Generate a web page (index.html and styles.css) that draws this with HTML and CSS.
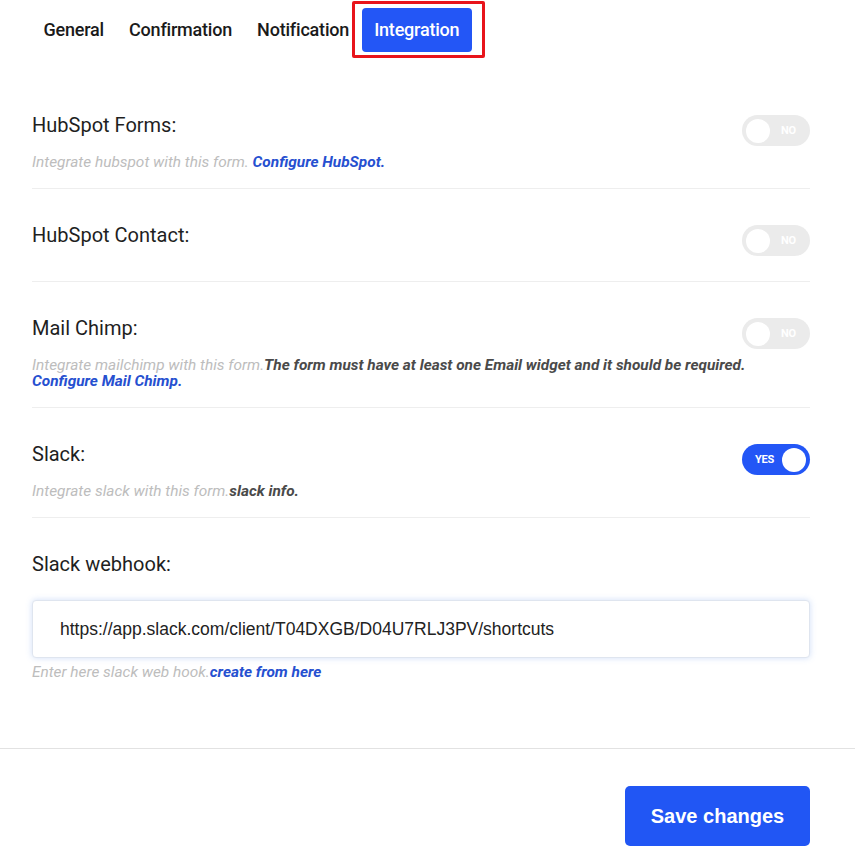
FILE: index.html
```html
<!DOCTYPE html>
<html lang="en">
<head>
<meta charset="utf-8">
<title>Form settings - Integration</title>
<link rel="stylesheet" href="styles.css">
</head>
<body>
<div class="page">
  <nav class="tabs">
    <a class="tab">General</a>
    <a class="tab">Confirmation</a>
    <a class="tab">Notification</a>
    <a class="tab active">Integration</a>
  </nav>

  <section class="content">
    <div class="row">
      <div class="row-head">
        <span class="label">HubSpot Forms:</span>
        <span class="toggle off"><span class="knob"></span><span class="toggle-text">NO</span></span>
      </div>
      <p class="desc">Integrate hubspot with this form. <a class="link">Configure HubSpot.</a></p>
    </div>

    <div class="row no-desc">
      <div class="row-head">
        <span class="label">HubSpot Contact:</span>
        <span class="toggle off"><span class="knob"></span><span class="toggle-text">NO</span></span>
      </div>
    </div>

    <div class="row">
      <div class="row-head">
        <span class="label">Mail Chimp:</span>
        <span class="toggle off"><span class="knob"></span><span class="toggle-text">NO</span></span>
      </div>
      <p class="desc">Integrate mailchimp with this form.<strong class="note">The form must have at least one Email widget and it should be required.</strong><br><a class="link">Configure Mail Chimp.</a></p>
    </div>

    <div class="row">
      <div class="row-head">
        <span class="label">Slack:</span>
        <span class="toggle on"><span class="toggle-text">YES</span><span class="knob"></span></span>
      </div>
      <p class="desc">Integrate slack with this form.<strong class="note">slack info.</strong></p>
    </div>

    <div class="row last">
      <div class="row-head">
        <span class="label">Slack webhook:</span>
      </div>
      <input class="input" type="text" value="https://app.slack.com/client/T04DXGB/D04U7RLJ3PV/shortcuts">
      <p class="desc help">Enter here slack web hook.<a class="link">create from here</a></p>
    </div>
  </section>

  <footer class="footer">
    <button class="save" type="button">Save changes</button>
  </footer>
</div>
</body>
</html>
```
FILE: styles.css
```css
* { box-sizing: border-box; }

html, body {
  margin: 0;
  padding: 0;
  background: #ffffff;
}

body {
  font-family: Roboto, "Liberation Sans", Arial, sans-serif;
  color: #222;
}

.page {
  width: 855px;
}

.tabs {
  display: flex;
  align-items: flex-start;
  height: 60px;
  padding: 8px 0 0 31px;
}

.tab {
  display: block;
  height: 44px;
  line-height: 44px;
  padding: 0 12.5px;
  font-size: 18px;
  font-weight: 500;
  color: #1a1a1a;
  letter-spacing: -0.2px;
  cursor: pointer;
}

.tab.active {
  position: relative;
  background: #2356f6;
  color: #fff;
  border-radius: 4px;
}

.tab.active::after {
  content: "";
  position: absolute;
  left: -10px;
  right: -13px;
  top: -7px;
  bottom: -6px;
  border: 3px solid #e8141b;
  border-radius: 2px;
  pointer-events: none;
}

.content {
  padding: 19px 45px 0 32px;
}

.row {
  padding: 35px 0 18px;
  border-bottom: 1px solid #eeeeee;
}

.row.no-desc {
  padding-bottom: 25px;
}

.row.last {
  border-bottom: none;
  padding-bottom: 68px;
}

.row-head {
  display: flex;
  justify-content: space-between;
  align-items: flex-start;
}

.label {
  font-size: 20px;
  line-height: 22px;
  color: #1f1f1f;
}

.toggle {
  display: flex;
  align-items: center;
  width: 68px;
  height: 31px;
  border-radius: 16px;
  margin-top: 1px;
  padding: 0 4px;
}

.toggle.off {
  background: #ebebeb;
}

.toggle.on {
  background: #2356f6;
  justify-content: space-between;
}

.knob {
  display: block;
  width: 24px;
  height: 24px;
  border-radius: 50%;
  background: #ffffff;
}

.toggle-text {
  font-size: 11px;
  font-weight: 700;
  color: #fff;
  letter-spacing: -0.3px;
}

.toggle.off .toggle-text {
  margin-left: 11px;
}

.toggle.on .toggle-text {
  margin-left: 9px;
}

.desc {
  margin: 8px 0 0;
  font-size: 15.4px;
  line-height: 16px;
  font-style: italic;
  color: #bdbdbd;
}

.link {
  color: #2650d0;
  font-weight: 700;
  text-decoration: none;
  cursor: pointer;
}

.note {
  color: #4a4a4a;
  font-weight: 700;
}

.input {
  display: block;
  width: 100%;
  height: 58px;
  margin-top: 25px;
  padding: 0 27px;
  border: 1px solid #dfe5ef;
  border-radius: 4px;
  box-shadow: 0 0 6px rgba(90, 140, 230, 0.28);
  font-family: "Liberation Sans", Arial, sans-serif;
  font-size: 17.5px;
  color: #222;
  background: #fff;
  outline: none;
}

.desc.help {
  margin-top: 6px;
}

.footer {
  display: flex;
  justify-content: flex-end;
  border-top: 1px solid #e2e2e2;
  padding: 37px 45px 11px 0;
}

.save {
  width: 185px;
  height: 60px;
  border: none;
  border-radius: 5px;
  background: #2156f4;
  color: #fff;
  font-family: "Liberation Sans", Arial, sans-serif;
  font-size: 20px;
  font-weight: 700;
  cursor: pointer;
}
```
